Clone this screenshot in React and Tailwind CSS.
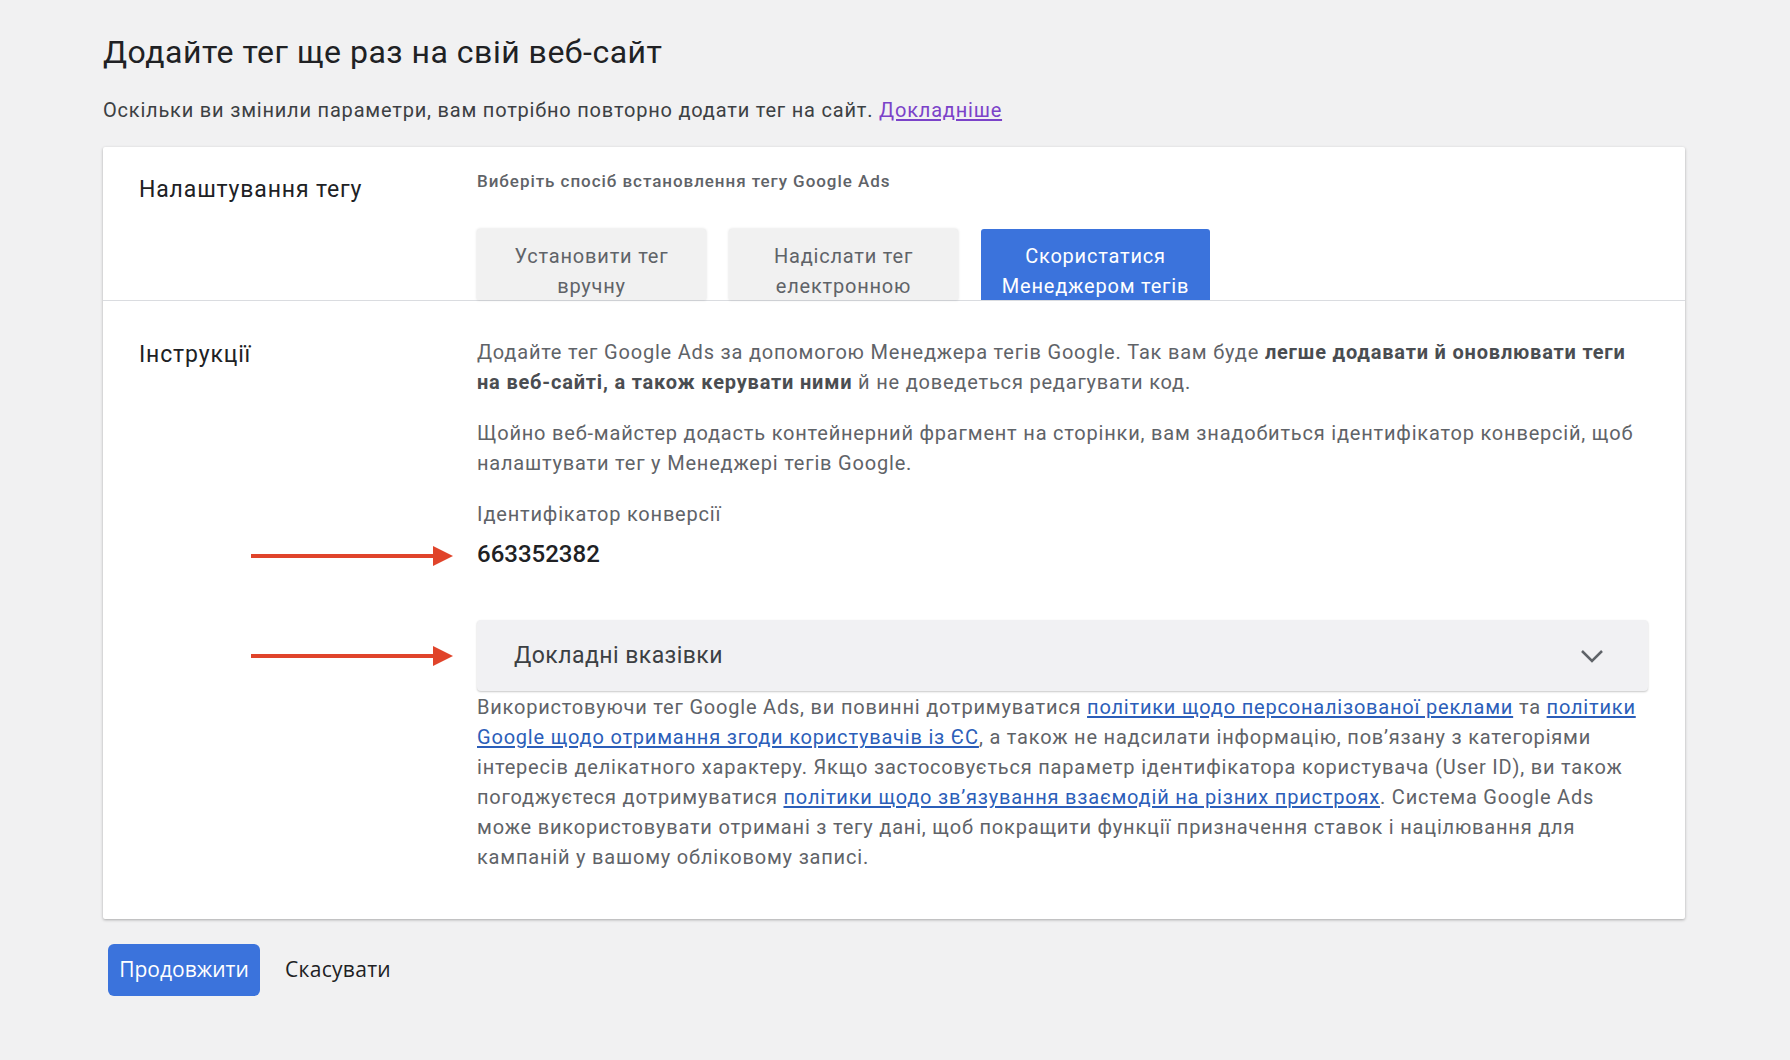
export default function App() {
  const Arrow = () => (
    <svg width="202" height="20" viewBox="0 0 202 20" className="block">
      <rect x="0" y="8" width="186" height="4" fill="#e0442b" />
      <polygon points="182,0 202,10 182,20" fill="#e0442b" />
    </svg>
  );
  const link = "text-[#2b5eb9] underline underline-offset-2";
  return (
    <div className="min-h-screen w-full bg-[#f1f1f2] font-['Roboto',sans-serif] pl-[103px] pr-[105px] pt-[33px] pb-10">
      <h1 className="text-[32px] leading-[38px] tracking-[0.5px] text-[#202124] font-normal">
        Додайте тег ще раз на свій веб-сайт
      </h1>
      <p className="mt-[25px] text-[20px] leading-[28px] tracking-[0.8px] text-[#3c4043]">
        Оскільки ви змінили параметри, вам потрібно повторно додати тег на сайт.{" "}
        <a className="text-[#7b42c9] underline underline-offset-2">Докладніше</a>
      </p>

      <div className="mt-[23px] bg-white rounded-[2px] shadow-[0_1px_3px_rgba(0,0,0,0.3)]">
        <div className="flex border-b border-[#dadce0]">
          <div className="w-[374px] shrink-0 pl-[36px] pt-[28px] text-[23px] leading-[30px] tracking-[0.85px] text-[#202124]">
            Налаштування тегу
          </div>
          <div className="pt-[22px]">
            <div className="text-[17px] leading-[24px] tracking-[0.95px] font-medium text-[#5f6368]">
              Виберіть спосіб встановлення тегу Google Ads
            </div>
            <div className="mt-[36px] flex gap-[23px] tracking-[0.8px]">
              <div className="w-[229px] h-[71px] overflow-hidden pt-[12px] text-center text-[20px] leading-[30px] text-[#5f6368] bg-[#f1f1f1] rounded-t-[3px] shadow-[0_0_3px_rgba(0,0,0,0.15)]">
                Установити тег
                <br />
                вручну
              </div>
              <div className="w-[229px] h-[71px] overflow-hidden pt-[12px] text-center text-[20px] leading-[30px] text-[#5f6368] bg-[#f1f1f1] rounded-t-[3px] shadow-[0_0_3px_rgba(0,0,0,0.15)]">
                Надіслати тег
                <br />
                електронною
              </div>
              <div className="w-[229px] h-[71px] overflow-hidden pt-[12px] text-center text-[20px] leading-[30px] text-white bg-[#3b73dc] rounded-t-[3px]">
                Скористатися
                <br />
                Менеджером тегів
              </div>
            </div>
          </div>
        </div>

        <div className="flex pt-[36px] pb-[47px]">
          <div className="w-[374px] shrink-0 pl-[36px] pt-[3px] text-[23px] leading-[30px] tracking-[0.85px] text-[#202124]">
            Інструкції
          </div>
          <div className="w-[1171px] text-[20px] leading-[30px] tracking-[0.8px] text-[#5f6368] whitespace-nowrap">
            <p>
              Додайте тег Google Ads за допомогою Менеджера тегів Google. Так вам буде{" "}
              <span className="font-bold text-[#4a4d51]">
                легше додавати й оновлювати теги
                <br />
                на веб-сайті, а також керувати ними
              </span>{" "}
              й не доведеться редагувати код.
            </p>
            <p className="mt-[21px]">
              Щойно веб-майстер додасть контейнерний фрагмент на сторінки, вам знадобиться ідентифікатор конверсій, щоб
              <br />
              налаштувати тег у Менеджері тегів Google.
            </p>
            <p className="mt-[21px]">Ідентифікатор конверсії</p>
            <div className="relative mt-[10px] text-[24px] leading-[30px] tracking-normal font-medium text-[#202124]">
              663352382
              <div className="absolute left-[-226px] top-[7px]">
                <Arrow />
              </div>
            </div>

            <div className="relative mt-[51px] h-[71px] bg-[#f1f1f3] rounded-[4px] shadow-[0_1px_2px_rgba(0,0,0,0.22)] flex items-center justify-between pl-[37px] pr-[44px]">
              <span className="text-[23px] tracking-[0.45px] text-[#3c4043]">Докладні вказівки</span>
              <svg width="24" height="14" viewBox="0 0 24 14" className="block">
                <polyline points="2,2 12,12 22,2" fill="none" stroke="#5f6368" strokeWidth="2.5" />
              </svg>
              <div className="absolute left-[-226px] top-[26px]">
                <Arrow />
              </div>
            </div>

            <p className="mt-[1px]">
              Використовуючи тег Google Ads, ви повинні дотримуватися{" "}
              <a className={link}>політики щодо персоналізованої реклами</a> та{" "}
              <a className={link}>
                політики
                <br />
                Google щодо отримання згоди користувачів із ЄС
              </a>
              , а також не надсилати інформацію, пов’язану з категоріями
              <br />
              інтересів делікатного характеру. Якщо застосовується параметр ідентифікатора користувача (User ID), ви також
              <br />
              погоджуєтеся дотримуватися{" "}
              <a className={link}>політики щодо зв’язування взаємодій на різних пристроях</a>. Система Google Ads
              <br />
              може використовувати отримані з тегу дані, щоб покращити функції призначення ставок і націлювання для
              <br />
              кампаній у вашому обліковому записі.
            </p>
          </div>
        </div>
      </div>

      <div className="mt-[25px] ml-[5px] flex items-center font-['Open_Sans',sans-serif]">
        <button className="h-[52px] w-[152px] rounded-[6px] bg-[#3b73dc] text-white text-[21px] font-medium">
          Продовжити
        </button>
        <button className="ml-[25px] text-[21px] tracking-[0.3px] font-medium text-[#202124]">Скасувати</button>
      </div>
    </div>
  );
}
